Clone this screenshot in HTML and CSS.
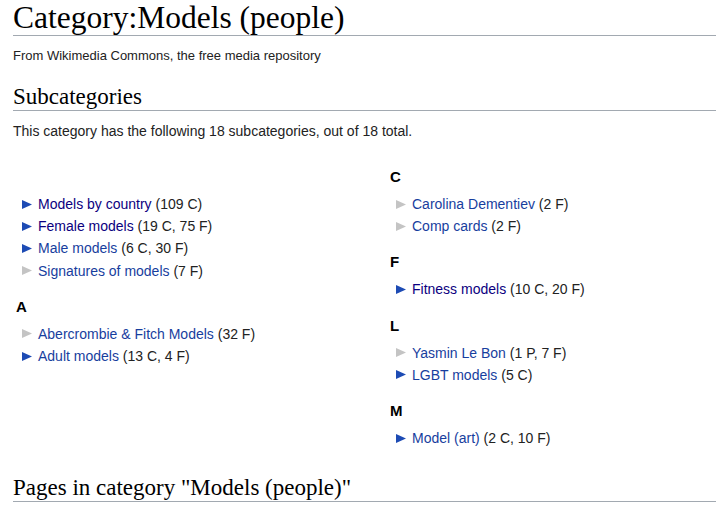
FILE: index.html
```html
<!DOCTYPE html>
<html>
<head>
<meta charset="utf-8">
<link rel="stylesheet" href="styles.css">
</head>
<body>
<div class="page">
  <h1 class="title">Category:Models (people)</h1>
  <div class="tagline">From Wikimedia Commons, the free media repository</div>
  <h2 class="section">Subcategories</h2>
  <p class="intro">This category has the following 18 subcategories, out of 18 total.</p>
  <div class="columns">
    <div class="col">
      <div class="group">
        <h3 class="letter">&nbsp;</h3>
        <ul class="items">
          <li><svg class="tri full" viewBox="0 0 10 9"><polygon points="0,0 10,4.5 0,9"/></svg><span class="label"><a class="visited" href="#">Models by country</a> <span class="count">(109 C)</span></span></li>
          <li><svg class="tri full" viewBox="0 0 10 9"><polygon points="0,0 10,4.5 0,9"/></svg><span class="label"><a class="visited" href="#">Female models</a> <span class="count">(19 C, 75 F)</span></span></li>
          <li><svg class="tri full" viewBox="0 0 10 9"><polygon points="0,0 10,4.5 0,9"/></svg><span class="label"><a href="#">Male models</a> <span class="count">(6 C, 30 F)</span></span></li>
          <li><svg class="tri empty" viewBox="0 0 10 9"><polygon points="0,0 10,4.5 0,9"/></svg><span class="label"><a href="#">Signatures of models</a> <span class="count">(7 F)</span></span></li>
        </ul>
      </div>
      <div class="group">
        <h3 class="letter">A</h3>
        <ul class="items">
          <li><svg class="tri empty" viewBox="0 0 10 9"><polygon points="0,0 10,4.5 0,9"/></svg><span class="label"><a href="#">Abercrombie &amp; Fitch Models</a> <span class="count">(32 F)</span></span></li>
          <li><svg class="tri full" viewBox="0 0 10 9"><polygon points="0,0 10,4.5 0,9"/></svg><span class="label"><a href="#">Adult models</a> <span class="count">(13 C, 4 F)</span></span></li>
        </ul>
      </div>
    </div>
    <div class="col">
      <div class="group">
        <h3 class="letter">C</h3>
        <ul class="items">
          <li><svg class="tri empty" viewBox="0 0 10 9"><polygon points="0,0 10,4.5 0,9"/></svg><span class="label"><a href="#">Carolina Dementiev</a> <span class="count">(2 F)</span></span></li>
          <li><svg class="tri empty" viewBox="0 0 10 9"><polygon points="0,0 10,4.5 0,9"/></svg><span class="label"><a href="#">Comp cards</a> <span class="count">(2 F)</span></span></li>
        </ul>
      </div>
      <div class="group">
        <h3 class="letter">F</h3>
        <ul class="items">
          <li><svg class="tri full" viewBox="0 0 10 9"><polygon points="0,0 10,4.5 0,9"/></svg><span class="label"><a class="visited" href="#">Fitness models</a> <span class="count">(10 C, 20 F)</span></span></li>
        </ul>
      </div>
      <div class="group">
        <h3 class="letter">L</h3>
        <ul class="items">
          <li><svg class="tri empty" viewBox="0 0 10 9"><polygon points="0,0 10,4.5 0,9"/></svg><span class="label"><a href="#">Yasmin Le Bon</a> <span class="count">(1 P, 7 F)</span></span></li>
          <li><svg class="tri full" viewBox="0 0 10 9"><polygon points="0,0 10,4.5 0,9"/></svg><span class="label"><a href="#">LGBT models</a> <span class="count">(5 C)</span></span></li>
        </ul>
      </div>
      <div class="group">
        <h3 class="letter">M</h3>
        <ul class="items">
          <li><svg class="tri full" viewBox="0 0 10 9"><polygon points="0,0 10,4.5 0,9"/></svg><span class="label"><a href="#">Model (art)</a> <span class="count">(2 C, 10 F)</span></span></li>
        </ul>
      </div>
    </div>
  </div>
  <h2 class="section pages">Pages in category "Models (people)"</h2>
</div>
</body>
</html>
```

FILE: styles.css
```css
html, body {
  margin: 0;
  padding: 0;
  background: #ffffff;
}

.page {
  padding: 0 0 0 13px;
  font-family: "Liberation Sans", Arial, sans-serif;
  color: #222222;
}

.title {
  margin: 0;
  font-family: "Liberation Serif", "Times New Roman", serif;
  font-weight: normal;
  font-size: 31.5px;
  line-height: 35px;
  color: #000000;
  border-bottom: 1px solid #a2a9b1;
}

.tagline {
  margin-top: 12px;
  font-size: 13px;
  line-height: 15px;
  color: #222222;
}

.section {
  margin: 21px 0 0 0;
  font-family: "Liberation Serif", "Times New Roman", serif;
  font-weight: normal;
  font-size: 23px;
  line-height: 26px;
  color: #000000;
  border-bottom: 1px solid #a2a9b1;
}

.intro {
  margin: 12px 0 0 0;
  font-size: 14px;
  line-height: 16px;
  color: #222222;
}

.columns {
  display: grid;
  grid-template-columns: 374px 1fr;
  margin: 13px 0 0 3px;
}

.group {
  margin-top: 16px;
}

.letter {
  margin: 0 0 7px 0;
  font-size: 15px;
  line-height: 18px;
  font-weight: bold;
  color: #000000;
}

.items {
  list-style: none;
  margin: 0;
  padding: 0;
}

.items li {
  display: flex;
  align-items: center;
  font-size: 14px;
  line-height: 22.2px;
}

.label {
  white-space: nowrap;
}

.tri {
  width: 10px;
  height: 9px;
  margin: 0 6px 0 6px;
  flex: none;
}

.tri.full {
  fill: #1d4bb4;
}

.tri.empty {
  fill: #c4c4c4;
}

.items a {
  color: #173e9e;
  text-decoration: none;
}

.items a.visited {
  color: #0b0080;
}

.count {
  color: #222222;
}

.pages {
  margin-top: 26px;
}
```
